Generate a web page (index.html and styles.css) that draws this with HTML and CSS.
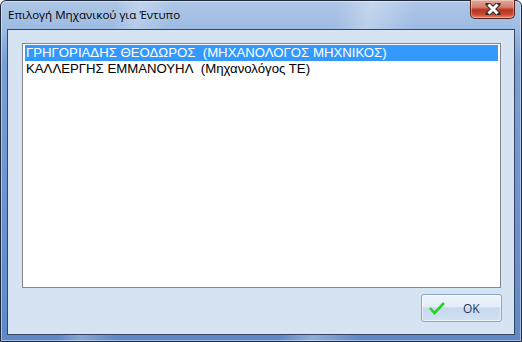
FILE: index.html
```html
<!DOCTYPE html>
<html lang="el">
<head>
  <meta charset="UTF-8" />
  <title>Επιλογή Μηχανικού για Έντυπο</title>
  <link rel="stylesheet" href="styles.css">
</head>
<body>
  <div class="window">
    <div class="titlebar">
      <span class="title">Επιλογή Μηχανικού για Έντυπο</span>
      <button class="close" title="Κλείσιμο">
        <svg width="16" height="12" viewBox="0 0 16 12">
          <path d="M3 1 L13 11 M13 1 L3 11" stroke="#3c2a2a" stroke-width="5" stroke-linecap="round"/>
          <path d="M3.5 1.5 L12.5 10.5 M12.5 1.5 L3.5 10.5" stroke="#ffffff" stroke-width="3"/>
        </svg>
      </button>
    </div>

    <div class="client">
      <ul class="listbox">
        <li class="selected">ΓΡΗΓΟΡΙΑΔΗΣ ΘΕΟΔΩΡΟΣ&nbsp; (ΜΗΧΑΝΟΛΟΓΟΣ ΜΗΧΝΙΚΟΣ)</li>
        <li>ΚΑΛΛΕΡΓΗΣ ΕΜΜΑΝΟΥΗΛ&nbsp; (Μηχανολόγος ΤΕ)</li>
      </ul>

      <div class="footer">
        <button class="btn-ok">
          <svg class="check" width="16" height="14" viewBox="0 0 16 14">
            <path d="M1 7 L5.5 12 L15 2" fill="none" stroke="#22d81e" stroke-width="2.6"/>
          </svg>
          <span>OK</span>
        </button>
      </div>
    </div>
  </div>
</body>
</html>
```

FILE: styles.css
```css
:root {
  --frame-dark: #1f2b3c;
  --client: #d5e3f2;
  --list-border: #828790;
  --select: #3399ff;
}

html, body {
  margin: 0;
  padding: 0;
}

body {
  width: 522px;
  height: 342px;
  overflow: hidden;
  font-family: "Liberation Sans", Arial, sans-serif;
}

.window {
  box-sizing: border-box;
  width: 522px;
  height: 342px;
  border: 1px solid var(--frame-dark);
  border-radius: 6px 6px 0 0;
  background:
    linear-gradient(100deg, rgba(255,255,255,0) 20%, rgba(255,255,255,0.25) 24%, rgba(255,255,255,0) 30%, rgba(255,255,255,0) 58%, rgba(255,255,255,0.3) 64%, rgba(255,255,255,0) 72%),
    linear-gradient(180deg, #aec6e6 0px, #9dbbe2 28px, #7a9fd6 60px, #5f88c8 100%);
  display: flex;
  flex-direction: column;
  box-shadow: inset 0 0 0 1px rgba(255,255,255,0.45);
}

.titlebar {
  height: 28px;
  display: flex;
  align-items: flex-start;
  justify-content: space-between;
  padding-left: 7px;
}

.title {
  margin-top: 6px;
  font-family: "Open Sans", "Noto Sans", sans-serif;
  font-size: 11.6px;
  color: #000;
}

.close {
  width: 45px;
  height: 19px;
  margin: -1px 6px 0 0;
  padding: 0;
  border: 1px solid #5b2018;
  border-top: none;
  border-radius: 0 0 5px 5px;
  background: linear-gradient(180deg, #e6a99c 0%, #d47d6b 40%, #b8331c 55%, #c74a33 80%, #dc8a6f 100%);
  box-shadow: inset 0 0 0 1px rgba(255,255,255,0.35);
  display: flex;
  align-items: center;
  justify-content: center;
}

.client {
  flex: 1;
  margin: 0 6px 6px 6px;
  border: 1px solid #35465e;
  background: var(--client);
  padding: 13px 13px 0 14px;
  display: flex;
  flex-direction: column;
}

.listbox {
  list-style: none;
  margin: 0;
  padding: 1px 2px;
  height: 241px;
  border: 1px solid var(--list-border);
  background: #fff;
  font-size: 13.2px;
}

.listbox li {
  height: 16px;
  line-height: 16px;
  padding-left: 1px;
  white-space: nowrap;
  color: #000;
}

.listbox li.selected {
  background: var(--select);
  color: #fff;
}

.footer {
  display: flex;
  justify-content: flex-end;
  padding-top: 6px;
  margin-right: -1px;
}

.btn-ok {
  width: 81px;
  height: 28px;
  padding: 0 0 0 7px;
  border: 1px solid #8ca6c9;
  border-radius: 3px;
  background: linear-gradient(180deg, #eef4fb 0%, #e3edf8 45%, #c7d9ef 50%, #d2e1f2 100%);
  box-shadow: inset 0 0 0 1px rgba(255,255,255,0.6);
  display: flex;
  align-items: center;
  font-family: "Open Sans", "Noto Sans", sans-serif;
  font-size: 12px;
  color: #1e395b;
}

.btn-ok span {
  margin-left: 18px;
}
```
